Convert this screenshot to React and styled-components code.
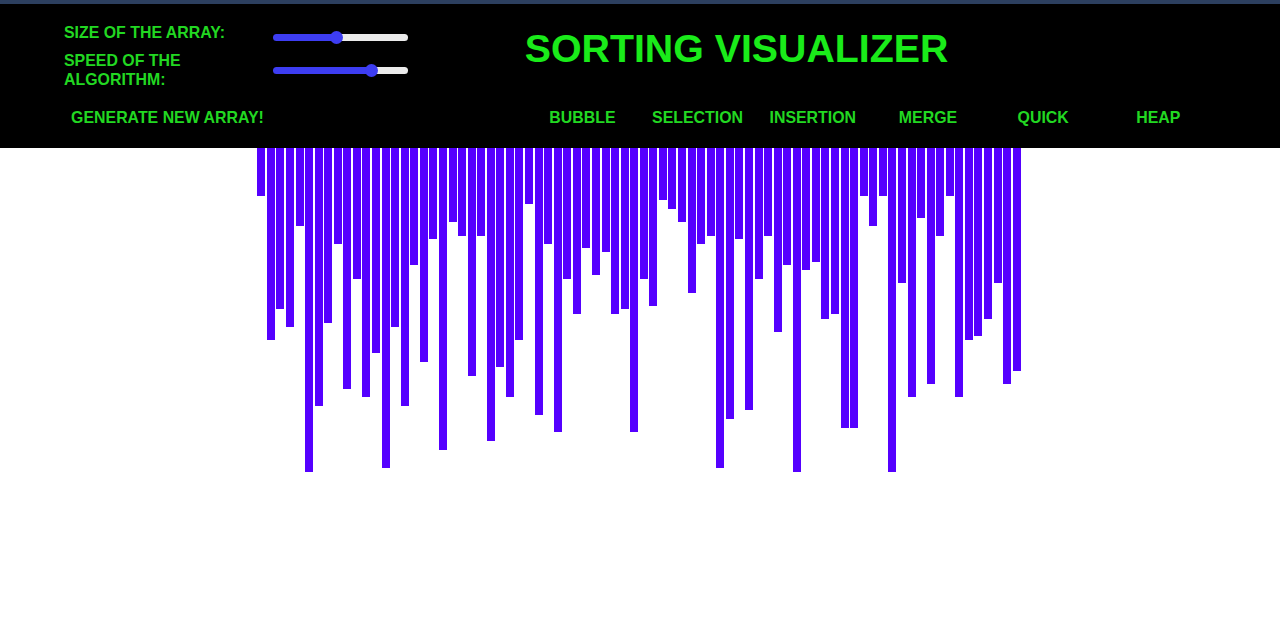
import React, { useState } from "react";
import styled, { createGlobalStyle } from "styled-components";

const GlobalStyle = createGlobalStyle`
  html, body {
    margin: 0;
    padding: 0;
    background: #ffffff;
  }
  body {
    font-family: "Liberation Sans", Arial, sans-serif;
  }
  #root {
    min-height: 630px;
  }
`;

const HEIGHTS = [
  48, 192, 161, 179, 78, 324, 258, 175, 96, 241,
  131, 249, 205, 320, 179, 258, 117, 214, 91, 302,
  74, 88, 228, 88, 293, 219, 249, 192, 56, 267,
  96, 284, 131, 166, 100, 127, 104, 166, 161, 284,
  131, 158, 52, 61, 74, 145, 96, 88, 320, 271,
  91, 262, 131, 88, 184, 117, 324, 122, 114, 171,
  166, 280, 280, 48, 78, 48, 324, 135, 249, 70,
  236, 88, 48, 249, 192, 188, 171, 135, 236, 223,
];

const ALGORITHMS = ["BUBBLE", "SELECTION", "INSERTION", "MERGE", "QUICK", "HEAP"];

const Page = styled.div`
  width: 100%;
  min-height: 630px;
  background: #ffffff;
`;

const Header = styled.header`
  box-sizing: border-box;
  height: 148px;
  background: #000000;
  border-top: 4px solid #2c3f5f;
  padding: 0 64px 15px;
  display: grid;
  grid-template-columns: 40% 60%;
  grid-template-rows: 98px 31px;
`;

const Controls = styled.div`
  padding-top: 19px;
  display: flex;
  flex-direction: column;
`;

const ControlRow = styled.div`
  display: flex;
  min-height: 28px;
`;

const Label = styled.div`
  width: 209px;
  flex: none;
  font-size: 15.9px;
  line-height: 19px;
  font-weight: bold;
  color: #22d822;
  align-self: flex-start;
  padding-right: 30px;
  box-sizing: border-box;
`;

const Slider = styled.input.attrs({ type: "range" })`
  -webkit-appearance: none;
  appearance: none;
  align-self: center;
  width: 135px;
  height: 7px;
  margin: 0;
  border-radius: 4px;
  outline: none;
  cursor: pointer;
  background: linear-gradient(
    to right,
    #3d3df2 0%,
    #3d3df2 ${(p) => p.$fill}%,
    #ebebeb ${(p) => p.$fill}%,
    #ebebeb 100%
  );

  &::-webkit-slider-thumb {
    -webkit-appearance: none;
    appearance: none;
    width: 13px;
    height: 13px;
    border-radius: 50%;
    background: #3d3df2;
    border: none;
  }
  &::-moz-range-thumb {
    width: 13px;
    height: 13px;
    border-radius: 50%;
    background: #3d3df2;
    border: none;
  }
`;

const TitleCell = styled.div`
  padding-top: 21px;
`;

const Title = styled.h1`
  margin: 0;
  font-size: 39.3px;
  line-height: 46px;
  font-weight: bold;
  color: #1aeb1a;
  white-space: nowrap;
`;

const LeftButtons = styled.div`
  display: flex;
  align-items: center;
`;

const AlgoButtons = styled.div`
  display: grid;
  grid-template-columns: repeat(6, 1fr);
  align-items: center;
`;

const NavButton = styled.button`
  box-sizing: border-box;
  width: ${(p) => (p.$wide ? "207px" : "100%")};
  height: 31px;
  padding: 0;
  border: none;
  background: transparent;
  font-family: "Liberation Sans", Arial, sans-serif;
  font-size: 15.9px;
  line-height: 19px;
  font-weight: bold;
  color: #22d822;
  text-align: center;
  white-space: nowrap;
  cursor: pointer;
`;

const BarArea = styled.div`
  display: flex;
  justify-content: center;
  align-items: flex-start;
  padding-right: 2px;
`;

const Bar = styled.div`
  width: 8px;
  margin: 0 0.786px;
  background: #5500ff;
  flex: none;
`;

function fillPct(value) {
  return ((6.5 + (value / 100) * 122) / 135) * 100;
}

export default function App() {
  const [size, setSize] = useState(46.7);
  const [speed, setSpeed] = useState(75.4);

  return (
    <Page>
      <GlobalStyle />
      <Header>
        <Controls>
          <ControlRow>
            <Label>SIZE OF THE ARRAY:</Label>
            <Slider
              min={0}
              max={100}
              step={0.1}
              value={size}
              $fill={fillPct(size)}
              onChange={(e) => setSize(Number(e.target.value))}
            />
          </ControlRow>
          <ControlRow>
            <Label>SPEED OF THE ALGORITHM:</Label>
            <Slider
              min={0}
              max={100}
              step={0.1}
              value={speed}
              $fill={fillPct(speed)}
              onChange={(e) => setSpeed(Number(e.target.value))}
            />
          </ControlRow>
        </Controls>
        <TitleCell>
          <Title>SORTING VISUALIZER</Title>
        </TitleCell>
        <LeftButtons>
          <NavButton $wide>GENERATE NEW ARRAY!</NavButton>
        </LeftButtons>
        <AlgoButtons>
          {ALGORITHMS.map((a) => (
            <NavButton key={a}>{a}</NavButton>
          ))}
        </AlgoButtons>
      </Header>
      <BarArea>
        {HEIGHTS.map((h, i) => (
          <Bar key={i} style={{ height: `${h}px` }} />
        ))}
      </BarArea>
    </Page>
  );
}
